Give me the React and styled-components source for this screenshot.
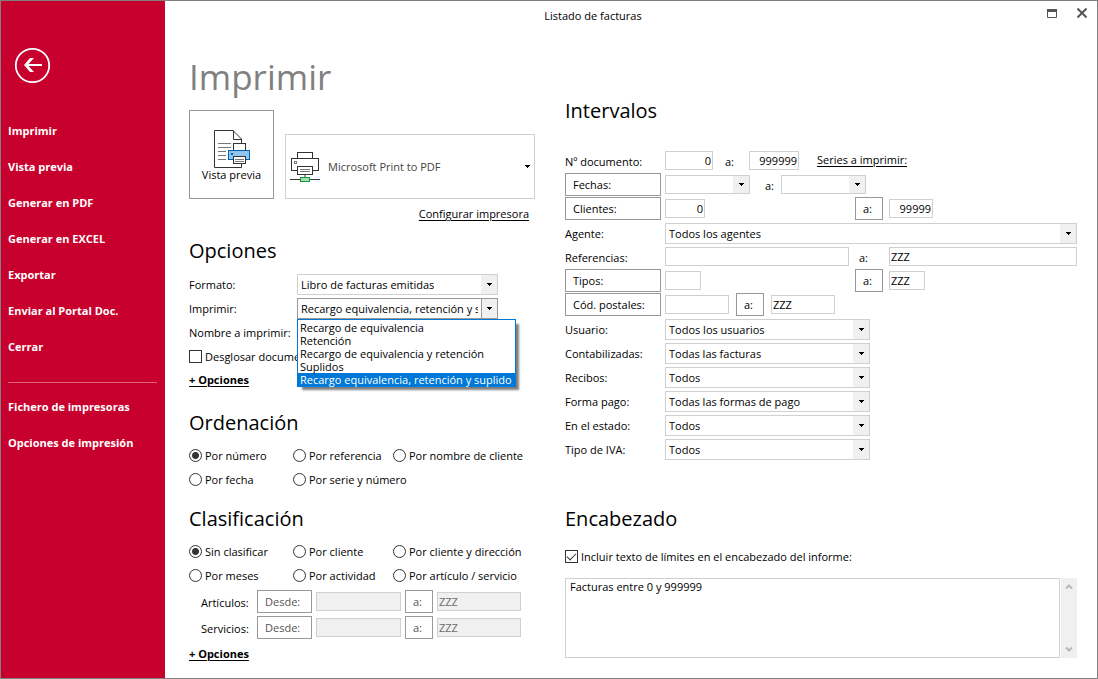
import React from "react";
import styled, { createGlobalStyle, css } from "styled-components";

const Global = createGlobalStyle`
  *, *::before, *::after { box-sizing: border-box; }
  body { margin: 0; background: #fff; }
  body, button, input, select, textarea {
    font-family: "Open Sans", "Noto Sans", sans-serif;
    font-size: 11px;
    color: #000;
  }
`;

const Window = styled.div`
  display: grid;
  grid-template-columns: 164px minmax(0, 1fr);
  min-height: 100vh;
  border: 1px solid #808080;
`;

const Sidebar = styled.nav`
  background: #c8002d;
  padding: 46px 8px 16px 7px;
`;

const BackButton = styled.button`
  display: block;
  width: 37px;
  height: 37px;
  margin: 0 0 29px 6px;
  padding: 0;
  border: 0;
  background: none;
`;

const NavItem = styled.a`
  display: block;
  height: 36px;
  line-height: 36px;
  font-weight: 700;
  color: #fff;
  text-decoration: none;
  white-space: nowrap;
`;

const NavDivider = styled.hr`
  height: 1px;
  margin: 17px 0 6px;
  border: 0;
  background: #e0607c;
`;

const Main = styled.main`
  display: flex;
  flex-direction: column;
  min-width: 0;
`;

const TitleBar = styled.header`
  display: flex;
  height: 30px;
`;

const WindowTitle = styled.div`
  flex: 1;
  line-height: 30px;
  text-align: center;
`;

const WindowControls = styled.div`
  display: flex;
  justify-content: flex-end;
  width: 76px;
`;

const ControlButton = styled.button`
  width: 30px;
  height: 24px;
  padding: 0;
  border: 0;
  background: none;
`;

const Columns = styled.div`
  display: grid;
  grid-template-columns: 346px minmax(0, 1fr);
  column-gap: 30px;
  padding: 0 20px 8px 24px;
`;

const PageTitle = styled.h1`
  margin: 19px 0 6px;
  font-size: 35px;
  line-height: 54px;
  font-weight: 400;
  color: #808080;
`;

const Heading = styled.h2`
  margin: ${(p) => p.$top}px 0 ${(p) => p.$bottom || 0}px;
  font-size: 20px;
  line-height: 40px;
  font-weight: 400;
`;

const PrinterRow = styled.div`
  display: flex;
  align-items: flex-end;
  gap: 11px;
`;

const PreviewButton = styled.button`
  display: flex;
  flex-direction: column;
  align-items: center;
  width: 85px;
  height: 89px;
  padding: 18px 0 0;
  border: 1px solid #999;
  background: #fff;
  line-height: 14px;
`;

const PrinterBox = styled.div`
  display: grid;
  flex: 1;
  align-items: center;
  height: 65px;
  border: 1px solid #d0d0d0;

  > * { grid-area: 1 / 1; }
  > svg { pointer-events: none; margin-left: 4px; }
  > svg:last-child { justify-self: end; margin-right: 4px; }
`;

const PrinterSelect = styled.select`
  appearance: none;
  width: 100%;
  height: 63px;
  padding: 0 20px 0 42px;
  border: 0;
  background: none;
  color: #444;
`;

const LinkLine = styled.div`
  line-height: 30px;
  padding-right: 6px;
  text-align: right;
`;

const Link = styled.a`
  color: #000;
  text-underline-offset: 2px;
  font-weight: ${(p) => (p.$bold ? 700 : 400)};
`;

const Row = styled.div`
  display: flex;
  align-items: flex-start;
  height: 24px;
`;

const OptionLabel = styled.label`
  flex: none;
  width: 108px;
  padding-top: 1px;
  line-height: 24px;
`;

const SelectBox = styled.div`
  position: relative;
  display: grid;
  grid-template-columns: minmax(0, 1fr) 16px;
  flex: ${(p) => (p.$w ? "none" : "1")};
  width: ${(p) => (p.$w ? p.$w + "px" : "auto")};
  height: ${(p) => p.$h || 21}px;
  margin-top: 2px;
  border: 1px solid ${(p) => (p.$open ? "#999" : "#d0d0d0")};
  background: #fff;
`;

const NativeSelect = styled.select`
  appearance: none;
  grid-area: 1 / 1 / 2 / 3;
  width: 100%;
  height: 100%;
  padding: 0 19px 0 3px;
  border: 0;
  background: none;
`;

const ArrowCell = styled.span`
  grid-area: 1 / 2;
  display: grid;
  place-items: center;
  background: #f0f0f0;
  border-left: ${(p) => (p.$open ? "1px solid #999" : "0")};
  pointer-events: none;
`;

const Popup = styled.ul`
  position: absolute;
  z-index: 2;
  top: 20px;
  left: -1px;
  width: 219px;
  margin: 0;
  padding: 1px 0 0;
  list-style: none;
  border: 1px solid #0078d7;
  background: #fff;
  box-shadow: 4px 4px 2px -1px rgba(0, 0, 0, 0.5);
`;

const PopupItem = styled.li`
  height: 13px;
  padding-left: 2px;
  line-height: 13px;
  white-space: nowrap;
  ${(p) => p.$active && css`background: #0078d7; color: #fff;`}
`;

const Choice = styled.label`
  display: flex;
  align-items: center;
  gap: 3px;
  height: 24px;
  white-space: nowrap;
`;

const NarrowChoice = styled(Choice)`
  width: 108px;
  overflow: hidden;
`;

const Radio = styled.input`
  appearance: none;
  flex: none;
  width: 13px;
  height: 13px;
  margin: 0;
  border: 1px solid #333;
  border-radius: 50%;
  background: #fff;
  &:checked { background: radial-gradient(circle, #333 0 3px, #fff 4px); }
`;

const Check = styled.input`
  appearance: none;
  flex: none;
  width: 13px;
  height: 13px;
  margin: 0;
  border: 1px solid #333;
  background: #fff;
  &:checked::after {
    content: "";
    display: block;
    width: 9px;
    height: 5px;
    margin: 2px 1px;
    border-left: 1px solid #333;
    border-bottom: 1px solid #333;
    transform: rotate(-45deg);
  }
`;

const RadioGrid = styled.div`
  display: grid;
  grid-template-columns: 104px 100px 1fr;
`;

const RangeList = styled.div`
  padding-top: 3px;
`;

const RangeRow = styled.div`
  display: flex;
  align-items: flex-start;
  gap: 4px;
  height: 26px;
  padding-left: 12px;
`;

const RangeLabel = styled.span`
  width: 52px;
  line-height: 26px;
`;

const Button = styled.button`
  flex: none;
  width: ${(p) => p.$w}px;
  height: 23px;
  padding: 0 7px;
  border: 1px solid #999;
  background: #fff;
  text-align: left;
  &:disabled { color: #555; }
`;

const Field = styled.input`
  flex: ${(p) => (p.$w ? "none" : "1")};
  min-width: 0;
  width: ${(p) => (p.$w ? p.$w + "px" : "100%")};
  height: 19px;
  margin: 2px 0 0;
  padding: 0 1px;
  border: 1px solid #d0d0d0;
  background: #fff;
  text-align: ${(p) => (p.$right ? "right" : "left")};
  &:disabled { background: #f0f0f0; color: #6d6d6d; }
`;

const FieldName = styled.div`
  flex: none;
  width: 100px;
  padding-top: 1px;
  line-height: 24px;
`;

const ButtonCell = styled.div`
  display: flex;
  flex: none;
  width: 100px;
`;

const Split = styled.div`
  display: grid;
  grid-template-columns: 184px 28px minmax(0, 1fr);
  column-gap: 6px;
  align-items: start;
  flex: 1;
`;

const PostalRange = styled.div`
  display: flex;
  align-items: flex-start;
  gap: 7px;
`;

const To = styled.label`
  padding: 1px ${(p) => p.$r || 0}px 0 ${(p) => p.$l || 0}px;
  line-height: 24px;
`;

const SeriesLink = styled(Link)`
  margin-left: 18px;
  line-height: 22px;
`;

const MoreLine = styled.div`
  line-height: 24px;
`;

const CheckLine = styled.div`
  padding: 5px 0 10px;
`;

const MemoBox = styled.div`
  display: flex;
  gap: 1px;
  height: 80px;
`;

const Memo = styled.textarea`
  flex: 1;
  padding: 0 4px;
  border: 1px solid #d0d0d0;
  background: #fff;
  line-height: 15px;
  resize: none;
`;

const ScrollTrack = styled.div`
  display: flex;
  flex-direction: column;
  justify-content: space-between;
  align-items: center;
  width: 16px;
  padding: 5px 0;
  background: #f0f0f0;
`;

const Arrow = () => (
  <svg width="5" height="3" viewBox="0 0 5 3" aria-hidden="true" shapeRendering="crispEdges">
    <path d="M0 0h5v1h-1v1h-1v1h-1v-1h-1v-1h-1z" fill="#000" />
  </svg>
);

const ScrollArrow = ({ down }) => (
  <svg width="8" height="7" viewBox="0 0 8 7" aria-hidden="true">
    <path d={down ? "M1 1.5 4 4.5 7 1.5" : "M1 5.5 4 2.5 7 5.5"} fill="none" stroke="#b8b8b8" strokeWidth="2" />
  </svg>
);

const BackIcon = () => (
  <svg width="37" height="37" viewBox="0 0 37 37" fill="none" aria-hidden="true">
    <circle cx="18.5" cy="18.5" r="16.7" stroke="#fff" strokeWidth="1.8" />
    <path d="M10 18 16 11H20L14.500 17H28V19H14.500L20 25H16z" fill="#fff" />
  </svg>
);

const PreviewIcon = () => (
  <svg width="38" height="39" viewBox="0 0 38 39" fill="none" aria-hidden="true">
    <path d="M1.500 1.500H20L28.500 10V38.500H1.500z" fill="#fff" stroke="#333" />
    <path d="M20.500 1.500V10.500H28.500" stroke="#333" />
    <path d="M5 14.500H18M5 18.500H18M5 22.500H13M5 26.500H13M5 30.500H13" stroke="#777" />
    <rect x="20.500" y="14.500" width="12" height="8" fill="#fff" stroke="#333" />
    <rect x="15.500" y="21.500" width="21" height="9" fill="#91c5f0" stroke="#0063b1" />
    <rect x="18" y="24" width="2" height="2" fill="#0063b1" />
    <rect x="20.500" y="27.500" width="12" height="7" fill="#fff" stroke="#333" />
    <path d="M22 30.500H31M22 32.500H31" stroke="#777" />
  </svg>
);

const PrinterIcon = () => (
  <svg width="31" height="31" viewBox="0 0 31 31" fill="none" aria-hidden="true">
    <rect x="7.500" y="1.500" width="15" height="7" fill="#fff" stroke="#333" />
    <rect x="1.500" y="7.500" width="27" height="12" fill="#fff" stroke="#333" />
    <rect x="4.500" y="10.500" width="2" height="2" stroke="#777" />
    <rect x="7.500" y="15.500" width="15" height="8" fill="#fff" stroke="#333" />
    <path d="M10 18.500H20M10 20.500H20" stroke="#777" />
    <path d="M15 24V27" stroke="#999" strokeWidth="2" />
    <path d="M0 28.500H30" stroke="#333" />
    <rect x="10.500" y="26.500" width="9" height="4" fill="#a9dcb0" stroke="#109840" />
  </svg>
);

const MaximizeIcon = () => (
  <svg width="10" height="9" viewBox="0 0 10 9" fill="none" aria-hidden="true">
    <path d="M0.500 0.500h9v8h-9z" stroke="#555" />
    <path d="M0 1.500h10" stroke="#555" strokeWidth="3" />
  </svg>
);

const CloseIcon = () => (
  <svg width="10" height="10" viewBox="0 0 10 10" fill="none" aria-hidden="true">
    <path d="M0.500 0.500 9.500 9.500M9.500 0.500 0.500 9.500" stroke="#555" strokeWidth="2" />
  </svg>
);

function Combo({ id, value, width, height, open, label, children }) {
  return (
    <SelectBox $w={width} $h={height} $open={open}>
      <NativeSelect id={id} aria-label={label} defaultValue={value}>
        <option>{value}</option>
      </NativeSelect>
      <ArrowCell $open={open}><Arrow /></ArrowCell>
      {children}
    </SelectBox>
  );
}

function Radios({ name, options }) {
  return (
    <RadioGrid role="radiogroup" aria-label={name}>
      {options.map((text, i) => (
        <Choice key={text}>
          <Radio type="radio" name={name} defaultChecked={i === 0} />
          {text}
        </Choice>
      ))}
    </RadioGrid>
  );
}

const navItems = ["Imprimir", "Vista previa", "Generar en PDF", "Generar en EXCEL", "Exportar", "Enviar al Portal Doc.", "Cerrar"];
const navExtra = ["Fichero de impresoras", "Opciones de impresión"];
const printChoices = [
  "Recargo de equivalencia",
  "Retención",
  "Recargo de equivalencia y retención",
  "Suplidos",
  "Recargo equivalencia, retención y suplido",
];
const filters = [
  ["Usuario:", "Todos los usuarios"],
  ["Contabilizadas:", "Todas las facturas"],
  ["Recibos:", "Todos"],
  ["Forma pago:", "Todas las formas de pago"],
  ["En el estado:", "Todos"],
  ["Tipo de IVA:", "Todos"],
];

export default function App() {
  return (
    <>
      <Global />
      <Window>
        <Sidebar>
          <BackButton aria-label="Volver"><BackIcon /></BackButton>
          {navItems.map((t) => <NavItem href="#" key={t}>{t}</NavItem>)}
          <NavDivider />
          {navExtra.map((t) => <NavItem href="#" key={t}>{t}</NavItem>)}
        </Sidebar>
        <Main>
          <TitleBar>
            <WindowTitle>Listado de facturas</WindowTitle>
            <WindowControls>
              <ControlButton aria-label="Maximizar"><MaximizeIcon /></ControlButton>
              <ControlButton aria-label="Cerrar ventana"><CloseIcon /></ControlButton>
            </WindowControls>
          </TitleBar>
          <Columns>
            <div>
              <PageTitle>Imprimir</PageTitle>
              <PrinterRow>
                <PreviewButton><PreviewIcon />Vista previa</PreviewButton>
                <PrinterBox>
                  <PrinterIcon />
                  <PrinterSelect aria-label="Impresora"><option>Microsoft Print to PDF</option></PrinterSelect>
                  <Arrow />
                </PrinterBox>
              </PrinterRow>
              <LinkLine><Link href="#">Configurar impresora</Link></LinkLine>

              <Heading $top={2} $bottom={1}>Opciones</Heading>
              <Row>
                <OptionLabel htmlFor="formato">Formato:</OptionLabel>
                <Combo id="formato" value="Libro de facturas emitidas" width={201} />
              </Row>
              <Row>
                <OptionLabel htmlFor="imprimir">Imprimir:</OptionLabel>
                <Combo id="imprimir" value={printChoices[4]} width={201} open>
                  <Popup role="listbox" aria-label="Imprimir">
                    {printChoices.map((t, i) => (
                      <PopupItem role="option" aria-selected={i === 4} $active={i === 4} key={t}>{t}</PopupItem>
                    ))}
                  </Popup>
                </Combo>
              </Row>
              <Row><OptionLabel as="span">Nombre a imprimir:</OptionLabel></Row>
              <NarrowChoice><Check type="checkbox" />Desglosar docume</NarrowChoice>
              <MoreLine><Link href="#" $bold>+ Opciones</Link></MoreLine>

              <Heading $top={11}>Ordenación</Heading>
              <Radios
                name="Ordenación"
                options={["Por número", "Por referencia", "Por nombre de cliente", "Por fecha", "Por serie y número"]}
              />

              <Heading $top={8}>Clasificación</Heading>
              <Radios
                name="Clasificación"
                options={["Sin clasificar", "Por cliente", "Por cliente y dirección", "Por meses", "Por actividad", "Por artículo / servicio"]}
              />
              <RangeList>
                {["Artículos", "Servicios"].map((t) => (
                  <RangeRow key={t}>
                    <RangeLabel>{t}:</RangeLabel>
                    <Button $w={55} disabled>Desde:</Button>
                    <Field $w={85} disabled aria-label={`${t} desde`} />
                    <Button $w={28} disabled>a:</Button>
                    <Field $w={84} disabled defaultValue="ZZZ" aria-label={`${t} hasta`} />
                  </RangeRow>
                ))}
              </RangeList>
              <MoreLine><Link href="#" $bold>+ Opciones</Link></MoreLine>
            </div>

            <div>
              <Heading $top={60} $bottom={18}>Intervalos</Heading>
              <Row>
                <FieldName as="label" htmlFor="doc1">Nº documento:</FieldName>
                <Field id="doc1" $w={48} $right defaultValue="0" />
                <To htmlFor="doc2" $l={12} $r={15}>a:</To>
                <Field id="doc2" $w={50} $right defaultValue="999999" />
                <SeriesLink href="#">Series a imprimir:</SeriesLink>
              </Row>
              <Row>
                <ButtonCell><Button $w={96}>Fechas:</Button></ButtonCell>
                <Combo label="Fecha inicial" value="" width={85} height={19} />
                <To htmlFor="fecha2" $l={15} $r={7}>a:</To>
                <Combo id="fecha2" value="" width={85} height={19} />
              </Row>
              <Row>
                <ButtonCell><Button $w={96}>Clientes:</Button></ButtonCell>
                <Split>
                  <Field $w={40} $right defaultValue="0" aria-label="Cliente inicial" />
                  <Button $w={28}>a:</Button>
                  <Field $w={44} $right defaultValue="99999" aria-label="Cliente final" />
                </Split>
              </Row>
              <Row>
                <FieldName as="label" htmlFor="agente">Agente:</FieldName>
                <Combo id="agente" value="Todos los agentes" />
              </Row>
              <Row>
                <FieldName as="label" htmlFor="ref1">Referencias:</FieldName>
                <Split>
                  <Field id="ref1" />
                  <To htmlFor="ref2" $l={4}>a:</To>
                  <Field id="ref2" defaultValue="ZZZ" />
                </Split>
              </Row>
              <Row>
                <ButtonCell><Button $w={96}>Tipos:</Button></ButtonCell>
                <Split>
                  <Field $w={36} aria-label="Tipo inicial" />
                  <Button $w={28}>a:</Button>
                  <Field $w={36} defaultValue="ZZZ" aria-label="Tipo final" />
                </Split>
              </Row>
              <Row>
                <ButtonCell><Button $w={96}>Cód. postales:</Button></ButtonCell>
                <PostalRange>
                  <Field $w={64} aria-label="Código postal inicial" />
                  <Button $w={28}>a:</Button>
                  <Field $w={64} defaultValue="ZZZ" aria-label="Código postal final" />
                </PostalRange>
              </Row>
              {filters.map(([label, value], i) => (
                <Row key={label}>
                  <FieldName as="label" htmlFor={`filtro${i}`}>{label}</FieldName>
                  <Combo id={`filtro${i}`} value={value} width={205} />
                </Row>
              ))}

              <Heading $top={38}>Encabezado</Heading>
              <CheckLine>
                <Choice>
                  <Check type="checkbox" defaultChecked />
                  Incluir texto de límites en el encabezado del informe:
                </Choice>
              </CheckLine>
              <MemoBox>
                <Memo aria-label="Texto del encabezado" defaultValue="Facturas entre 0 y 999999" />
                <ScrollTrack><ScrollArrow /><ScrollArrow down /></ScrollTrack>
              </MemoBox>
            </div>
          </Columns>
        </Main>
      </Window>
    </>
  );
}
